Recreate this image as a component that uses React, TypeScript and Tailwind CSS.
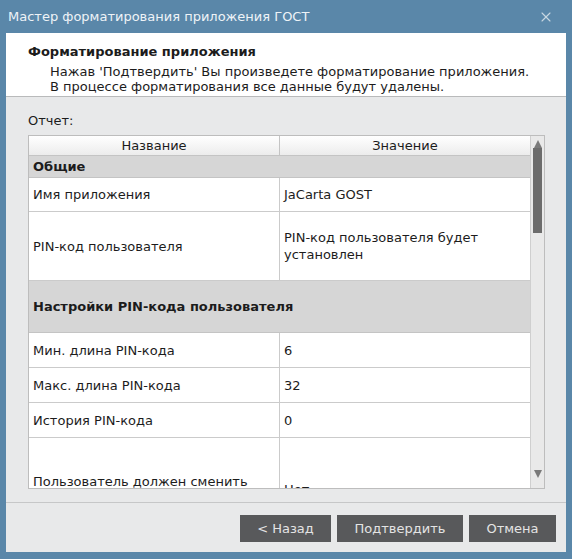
import { X } from "lucide-react";

type Row =
  | { kind: "group"; label: string; h: string }
  | { kind: "item"; name: string; value: string; h: string };

const rows: Row[] = [
  { kind: "group", label: "Общие", h: "h-[22px]" },
  { kind: "item", name: "Имя приложения", value: "JaCarta GOST", h: "h-[34px]" },
  { kind: "item", name: "PIN-код пользователя", value: "PIN-код пользователя будет установлен", h: "h-[69px]" },
  { kind: "group", label: "Настройки PIN-кода пользователя", h: "h-[52px]" },
  { kind: "item", name: "Мин. длина PIN-кода", value: "6", h: "h-[35px]" },
  { kind: "item", name: "Макс. длина PIN-кода", value: "32", h: "h-[35px]" },
  { kind: "item", name: "История PIN-кода", value: "0", h: "h-[35px]" },
  { kind: "item", name: "Пользователь должен сменить PIN-код", value: "Нет", h: "h-[104px]" },
];

export default function App() {
  return (
    <div
      className="w-[572px] h-[559px] bg-[#5a87a9] flex flex-col text-[13px] text-[#1c1c1c]"
      style={{ fontFamily: '"DejaVu Sans", Verdana, sans-serif' }}
    >
      {/* title bar */}
      <div className="h-[33px] shrink-0 flex items-center justify-between pl-[8px] pr-[18px] text-[#eef3f7]">
        <span className="text-[13px]">Мастер форматирования приложения ГОСТ</span>
        <X className="size-[16px] text-[#c9d7e2]" strokeWidth={1.6} />
      </div>

      <div className="flex-1 mx-[6px] mb-[7px] flex flex-col bg-[#e8e9ea]">
        {/* wizard header */}
        <div className="h-[64px] shrink-0 bg-white border-b border-[#b9babb] pl-[22px] pt-[11px] leading-[15px]">
          <div className="font-bold">Форматирование приложения</div>
          <div className="pl-[22px] mt-[5px]">
            <div>Нажав 'Подтвердить' Вы произведете форматирование приложения.</div>
            <div>В процессе форматирования все данные будут удалены.</div>
          </div>
        </div>

        {/* report */}
        <div className="flex-1 px-[22px] pt-[16px]">
          <div className="leading-[15px] mb-[7px]">Отчет:</div>
          <div className="w-[517px] h-[354px] flex border border-[#bdbdbd] bg-white overflow-hidden">
            <div className="flex-1 flex flex-col overflow-hidden">
              <div className="h-[20px] shrink-0 flex border-b border-[#c4c4c4] bg-gradient-to-b from-white to-[#ececec]">
                <div className="w-[251px] flex items-center justify-center border-r border-[#c4c4c4]">Название</div>
                <div className="flex-1 flex items-center justify-center">Значение</div>
              </div>
              {rows.map((r, i) =>
                r.kind === "group" ? (
                  <div key={i} className={`${r.h} shrink-0 flex items-center px-[4px] bg-[#d6d6d6] font-bold border-b border-[#c4c4c4]`}>
                    {r.label}
                  </div>
                ) : (
                  <div key={i} className={`${r.h} shrink-0 flex border-b border-[#cbcbcb] leading-[17px]`}>
                    <div className="w-[251px] flex items-center px-[4px] border-r border-[#cbcbcb]">{r.name}</div>
                    <div className="flex-1 flex items-center px-[4px]">{r.value}</div>
                  </div>
                )
              )}
            </div>

            {/* scrollbar */}
            <div className="w-[14px] shrink-0 border-l border-[#cfcfcf] bg-[#e9e9e9] flex flex-col items-center">
              <div className="h-[12px] flex items-end justify-center">
                <div className="w-0 h-0 border-x-[4px] border-x-transparent border-b-[8px] border-b-[#7a7a7a]" />
              </div>
              <div className="w-[9px] h-[85px] bg-[#6c6c6c]" />
              <div className="flex-1" />
              <div className="h-[18px] flex items-start justify-center">
                <div className="w-0 h-0 border-x-[4px] border-x-transparent border-t-[8px] border-t-[#7a7a7a]" />
              </div>
            </div>
          </div>
        </div>

        {/* buttons */}
        <div className="h-[50px] shrink-0 border-t border-[#c6c7c8] flex items-start justify-end gap-[6px] pt-[12px] pr-[10px]">
          <button className="w-[91px] h-[27px] bg-[#58595b] text-[#e4e4e4]">&lt; Назад</button>
          <button className="w-[126px] h-[27px] bg-[#58595b] text-[#e4e4e4]">Подтвердить</button>
          <button className="w-[87px] h-[27px] bg-[#58595b] text-[#e4e4e4]">Отмена</button>
        </div>
      </div>
    </div>
  );
}
